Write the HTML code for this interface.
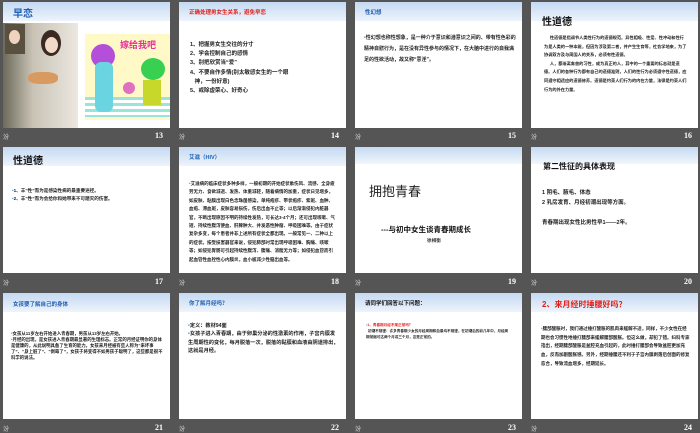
<!DOCTYPE html>
<html><head><meta charset="utf-8"><style>
*{margin:0;padding:0;box-sizing:border-box}
body{width:700px;height:431px;background:#555;position:relative;overflow:hidden;font-family:"Liberation Sans","Noto Sans CJK SC",sans-serif}
.s{position:absolute;width:167px;height:126px;background:#fff;overflow:hidden}
.h{position:absolute;left:0;top:0;width:100%;height:19px;background:linear-gradient(#c4d9f2,#eef4fc)}
.t{position:absolute;font-weight:bold;white-space:nowrap}
.b{position:absolute;color:#222;font-weight:bold}
.n{position:absolute;color:#fff;font-size:8px;font-weight:bold;font-family:"Liberation Serif",serif}
.f{position:absolute;color:#ddd;font-size:6px}
.tiny{font-size:3.6px;line-height:5.8px}
.dot{color:#4a8fd8}
</style></head><body>

<!-- Row 1 -->
<div class="s" style="left:3px;top:2px">
 <div class="h"></div>
 <div class="t" style="left:10px;top:3px;font-size:10px;color:#1f5fb5">早恋</div>
 <div style="position:absolute;left:0;top:21px;width:75px;height:105px;background:linear-gradient(90deg,#6c6a5a,#c9c3b6 40%,#ece8e0)"></div>
 <div style="position:absolute;left:2px;top:22px;width:20px;height:30px;background:#5a5040"></div>
 <div style="position:absolute;left:6px;top:28px;width:11px;height:14px;border-radius:50%;background:#f0d2bf"></div>
 <div style="position:absolute;left:38px;top:28px;width:20px;height:26px;border-radius:50%;background:#3a2a22"></div>
 <div style="position:absolute;left:42px;top:35px;width:13px;height:16px;border-radius:50%;background:#f3d9c8"></div>
 <div style="position:absolute;left:25px;top:70px;width:30px;height:12px;background:#d89a60;border-radius:40%"></div>
 <div style="position:absolute;left:82px;top:32px;width:85px;height:86px;background:#fff9c8"></div>
 <div style="position:absolute;left:82px;top:95px;width:85px;height:20px;background:repeating-linear-gradient(#9be5d8 0 3px,#fff 3px 6px)"></div>
 <div class="t" style="left:117px;top:36px;font-size:9px;color:#e8309a">嫁给我吧</div>
 <div style="position:absolute;left:88px;top:42px;width:24px;height:24px;border-radius:50%;background:#b34fd8"></div>
 <div style="position:absolute;left:92px;top:60px;width:18px;height:50px;background:#6ad4e0;border-radius:6px"></div>
 <div style="position:absolute;left:138px;top:56px;width:24px;height:22px;border-radius:50%;background:#38d050"></div>
 <div style="position:absolute;left:140px;top:78px;width:18px;height:25px;background:#c8d82a"></div>
 <div style="position:absolute;left:120px;top:80px;width:12px;height:12px;border-radius:50%;background:#e070c0"></div>
</div>
<div class="f" style="left:3px;top:132px">汾</div><div class="n" style="left:155px;top:131px">13</div>

<div class="s" style="left:179px;top:2px">
 <div class="h"></div>
 <div class="t" style="left:10px;top:6px;font-size:5.5px;color:#e0201a">正确处理男女生关系，避免早恋</div>
 <div class="b" style="left:11px;top:39px;font-size:5.5px;line-height:9.2px">1、把握男女生交往的分寸<br>2、学会控制自己的感情<br>3、别把欣赏当“爱”<br>4、不要自作多情(别太敏感女生的一个眼<br>&nbsp;&nbsp;&nbsp;神，一份好意)<br>5、戒除虚荣心、好奇心</div>
</div>
<div class="f" style="left:179px;top:132px">汾</div><div class="n" style="left:331px;top:131px">14</div>

<div class="s" style="left:355px;top:2px">
 <div class="h"></div>
 <div class="t" style="left:10px;top:6px;font-size:5.5px;color:#1f5fb5">性幻想</div>
 <div class="b" style="left:9px;top:31px;width:152px;font-size:5px;line-height:11px"><span class="dot">•</span>性幻想也称性想象，是一种介于意识和潜意识之间的、带有性色彩的精神自慰行为，是在没有异性参与的情况下，在大脑中进行的自我满足的性欲活动，故又称“意淫”。</div>
</div>
<div class="f" style="left:355px;top:132px">汾</div><div class="n" style="left:508px;top:131px">15</div>

<div class="s" style="left:531px;top:2px">
 <div class="h"></div>
 <div class="t" style="left:11px;top:11px;font-size:10px;color:#111">性道德</div>
 <div class="b" style="left:13px;top:32px;width:143px;font-size:4.2px;line-height:8.6px">&nbsp;&nbsp;&nbsp;&nbsp;&nbsp;性道德是指调节人类性行为的道德规范。异性相吸、性爱、性冲动和性行为是人类的一种本能，但因为涉及第二者，并产生生育等，社会学地来，为了协调双方及与周围人的关系，必须有性道德。<br>&nbsp;&nbsp;&nbsp;&nbsp;&nbsp;人，都渐离禽兽的习性，成为真正的人，其中的一个重要的标志就是道德。人们的各种行为都有自己的道德准则，人们的性行为必须遵守性道德，应同遵守相适应的道德修养。道德是约束人们行为的内在力量，法律是约束人们行为的外在力量。</div>
</div>
<div class="f" style="left:531px;top:132px">汾</div><div class="n" style="left:684px;top:131px">16</div>

<!-- Row 2 -->
<div class="s" style="left:3px;top:147px">
 <div class="h"></div>
 <div class="t" style="left:10px;top:5px;font-size:10px;color:#111">性道德</div>
 <div class="b" style="left:9px;top:40px;font-size:4.6px;line-height:8px"><span class="dot">•</span>1、丰“性”而为是感染性病的最重要途径。<br><span class="dot">•</span>2、丰“性”而为会给你和她带来不可磨灭的伤害。</div>
</div>
<div class="f" style="left:3px;top:278px">汾</div><div class="n" style="left:155px;top:277px">17</div>

<div class="s" style="left:179px;top:147px">
 <div class="h"></div>
 <div class="t" style="left:10px;top:6px;font-size:5.5px;color:#1f5fb5">艾滋（HIV）</div>
 <div class="b" style="left:10px;top:33px;width:148px;font-size:4.5px;line-height:8.4px"><span class="dot">•</span>艾滋病的临床症状多种多样，一般初期的开始症状象伤风、流感、全身疲劳无力、食欲减退、发热、体重减轻，随着病情的加重，症状日见增多，如皮肤、粘膜出现白色念珠菌感染，单纯疱疹、带状疱疹、紫斑、血肿、血疱、滞血斑，皮肤容易损伤，伤后出血不止等；以后渐渐侵犯内脏器官，不断出现原因不明的持续性发热，可长达3-4个月；还可出现咳嗽、气短、持续性腹泻便血、肝脾肿大、并发恶性肿瘤、呼吸困难等。由于症状复杂多变，每个患者并非上述所有症状全都出现。一般常见一、二种以上的症状。按受损害器官来说，侵犯肺部时常出现呼吸困难、胸痛、咳嗽等；如侵犯胃肠可引起持续性腹泻、腹痛、消瘦无力等；如侵犯血管而引起血管性血栓性心内膜炎，血小板减少性脑出血等。</div>
</div>
<div class="f" style="left:179px;top:278px">汾</div><div class="n" style="left:331px;top:277px">18</div>

<div class="s" style="left:355px;top:147px">
 <div class="h" style="height:17px;background:linear-gradient(#c4d9f2,#f2f6fc)"></div>
 <div style="position:absolute;left:14px;top:34px;font-size:13px;color:#222">拥抱青春</div>
 <div class="t" style="left:26px;top:77px;font-size:7.5px;color:#111">---与初中女生谈青春期成长</div>
 <div class="b" style="left:72px;top:91px;font-size:4.6px;color:#333">徐相衡</div>
</div>
<div class="f" style="left:355px;top:278px">汾</div><div class="n" style="left:508px;top:277px">19</div>

<div class="s" style="left:531px;top:147px">
 <div class="h" style="height:17px;background:linear-gradient(#c4d9f2,#f2f6fc)"></div>
 <div class="t" style="left:12px;top:14px;font-size:8px;color:#111">第二性征的具体表现</div>
 <div class="b" style="left:11px;top:41px;font-size:5.5px;line-height:10px">1 阴毛、腋毛、体态<br>2 乳房发育、月经初潮出现等方面。<br><br>青春期出现女性比男性早1——2年。</div>
</div>
<div class="f" style="left:531px;top:278px">汾</div><div class="n" style="left:684px;top:277px">20</div>

<!-- Row 3 -->
<div class="s" style="left:3px;top:293px">
 <div class="h"></div>
 <div class="t" style="left:10px;top:7px;font-size:5.5px;color:#1f5fb5">女孩要了解自己的身体</div>
 <div class="b" style="left:8px;top:38px;width:152px;font-size:4.4px;line-height:5.9px"><span class="dot">•</span>女孩从11岁左右开始进入青春期，男孩从13岁左右开始。<br><span class="dot">•</span>月经的出现，是女孩进入青春期最显著的生理标志。正常的月经证明你的身体是健康的，从此说明具备了生育的能力。女孩来月经被有些人称为“来坏事了”、“身上脏了”、“倒霉了”，女孩子将变得不如男孩子聪明了，这些都是很不科学的说法。</div>
</div>
<div class="f" style="left:3px;top:424px">汾</div><div class="n" style="left:155px;top:423px">21</div>

<div class="s" style="left:179px;top:293px">
 <div class="h"></div>
 <div class="t" style="left:10px;top:6px;font-size:5.5px;color:#1f5fb5">你了解月经吗？</div>
 <div class="b" style="left:9px;top:29px;width:152px;font-size:5.2px;line-height:8.4px"><span class="dot">•</span>定义：教材94面<br><span class="dot">•</span>女孩子进入青春期，由于卵巢分泌的性激素的作用，子宫内膜发生周期性的变化，每月脱落一次，脱落的黏膜和血液由阴道排出，这就是月经。</div>
</div>
<div class="f" style="left:179px;top:424px">汾</div><div class="n" style="left:331px;top:423px">22</div>

<div class="s" style="left:355px;top:293px">
 <div class="h"></div>
 <div class="t" style="left:10px;top:6px;font-size:5.5px;color:#111">请同学们回答以下问题：</div>
 <div class="b tiny" style="left:11px;top:30px;width:145px"><span style="color:#e0201a"><span class="dot">•</span>1、青春期月经不规正常吗？</span><br>&nbsp;&nbsp;初潮不规律：许多青春期少女的月经周期和血量均不规律，在初潮后的前几年中，月经周期常缩可达两个月或三个月，这是正常的。</div>
</div>
<div class="f" style="left:355px;top:424px">汾</div><div class="n" style="left:508px;top:423px">23</div>

<div class="s" style="left:531px;top:293px">
 <div class="h"></div>
 <div class="t" style="left:11px;top:6px;font-size:8px;color:#e0201a">2、来月经时捶腰好吗？</div>
 <div class="b" style="left:10px;top:32px;width:150px;font-size:4.5px;line-height:8.7px"><span class="dot">•</span>腰部酸胀时，我们通过捶打酸胀的肌肉来缓解不适，同样，不少女性在经期也会习惯性地捶打腰部来缓解腰部酸胀。但这么做，却犯了错。妇科专家指出，经期腰部酸胀是盆腔充血引起的，此时捶打腰部会导致盆腔更加充血，反而加剧酸胀感。另外，经期捶腰还不利于子宫内膜剥落后创面的修复愈合，导致流血增多，经期延长。</div>
</div>
<div class="f" style="left:531px;top:424px">汾</div><div class="n" style="left:684px;top:423px">24</div>

</body></html>
